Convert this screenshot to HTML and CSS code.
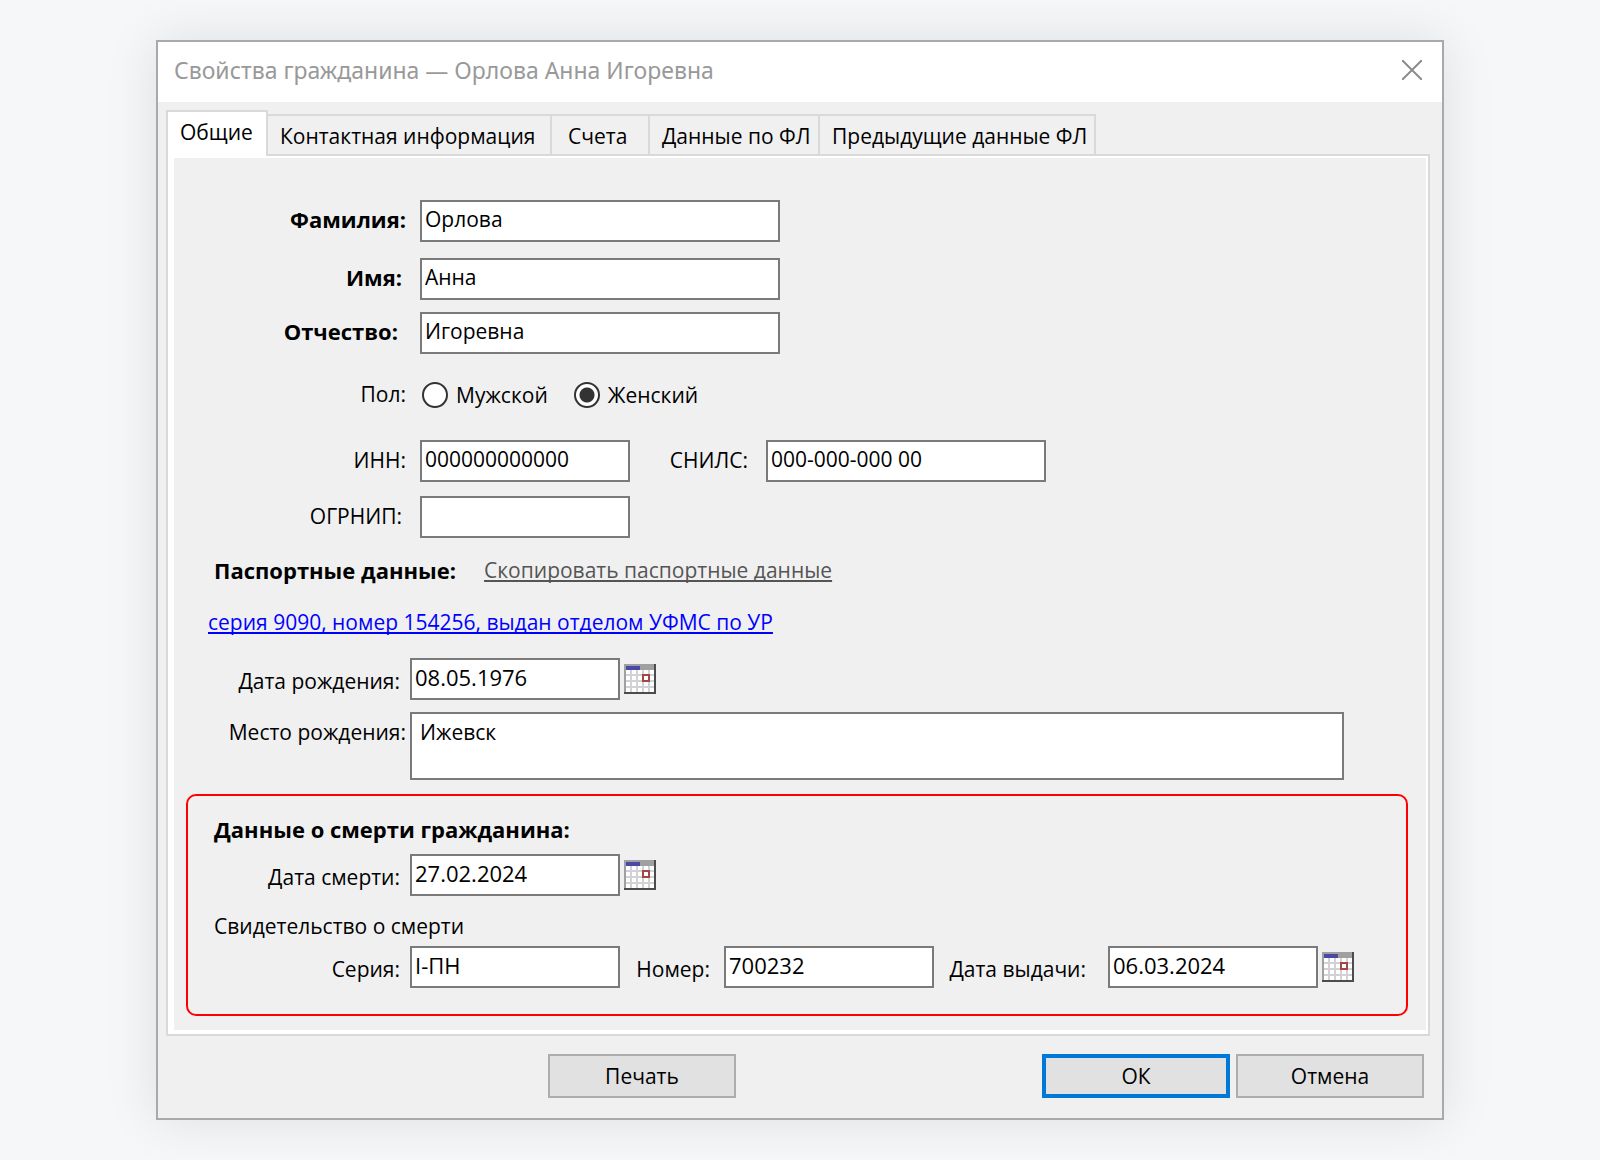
FILE: index.html
```html
<!DOCTYPE html>
<html lang="ru">
<head>
  <meta charset="utf-8">
  <meta name="viewport" content="width=device-width, initial-scale=1">
  <title>Свойства гражданина — Орлова Анна Игоревна</title>
  <link rel="stylesheet" href="styles.css">
</head>
<body>
  <svg class="sprite" aria-hidden="true">
    <symbol id="calendar" viewBox="0 0 16 15">
      <path fill="#ffffff" d="M0 0h16v15H0z"/>
      <path fill="#d2d2d6" d="M3 3h1v11H3zM6 3h1v11H6zM9 3h1v11H9zM12 3h1v11h-1zM1 5h14v1H1zM1 8h14v1H1zM1 11h14v1H1z"/>
      <path fill="#a0a0a0" d="M0 0h15v3H1v11H0z"/>
      <path fill="#484aa6" d="M1 1h7v2H1z"/>
      <path fill="#ffffff" d="M10 6h2v2h-2z"/>
      <path fill="#a04846" fill-rule="evenodd" d="M9 5h4v4H9zM10 6v2h2V6z"/>
      <path fill="#4c4c4c" d="M15 0h1v15H0v-1h15z"/>
    </symbol>
  </svg>

  <main class="dialog" role="dialog" aria-labelledby="dialog-title">
    <header class="titlebar">
      <h1 class="titlebar__text" id="dialog-title">Свойства гражданина — Орлова Анна Игоревна</h1>
      <button class="titlebar__close" type="button" aria-label="Закрыть">
        <svg viewBox="0 0 20 20" width="20" height="20"><path d="M0 0l20 20M20 0L0 20" fill="none" stroke="#8c8c8c" stroke-width="2"/></svg>
      </button>
    </header>

    <form class="content">
      <div class="tabs" role="tablist">
        <button class="tab tab--active" type="button" role="tab" aria-selected="true">Общие</button>
        <button class="tab tab--contacts" type="button" role="tab">Контактная информация</button>
        <button class="tab tab--accounts" type="button" role="tab">Счета</button>
        <button class="tab tab--person" type="button" role="tab">Данные по ФЛ</button>
        <button class="tab tab--history" type="button" role="tab">Предыдущие данные ФЛ</button>
      </div>

      <section class="panel" role="tabpanel">
        <div class="sheet">
          <div class="group group--names">
            <div class="row">
              <label class="label label--main label--bold" for="surname">Фамилия:</label>
              <input class="field field--wide" id="surname" type="text" value="Орлова">
            </div>
            <div class="row row--spaced">
              <label class="label label--main label--bold label--inset" for="name">Имя:</label>
              <input class="field field--wide" id="name" type="text" value="Анна">
            </div>
            <div class="row">
              <label class="label label--main label--bold label--inset-more" for="patronymic">Отчество:</label>
              <input class="field field--wide" id="patronymic" type="text" value="Игоревна">
            </div>
          </div>

          <div class="row row--sex" role="radiogroup" aria-labelledby="sex-label">
            <span class="label label--main" id="sex-label">Пол:</span>
            <label class="choice"><input class="radio" type="radio" name="sex">Мужской</label>
            <label class="choice"><input class="radio" type="radio" name="sex" checked>Женский</label>
          </div>

          <div class="group group--codes">
            <div class="row">
              <label class="label label--main" for="inn">ИНН:</label>
              <input class="field" id="inn" type="text" value="000000000000">
              <label class="label label--snils label--inset" for="snils">СНИЛС:</label>
              <input class="field field--snils" id="snils" type="text" value="000-000-000 00">
            </div>
            <div class="row">
              <label class="label label--main label--inset" for="ogrnip">ОГРНИП:</label>
              <input class="field" id="ogrnip" type="text">
            </div>
          </div>

          <div class="passport">
            <h2 class="heading">Паспортные данные:</h2>
            <a class="link link--muted" href="#copy">Скопировать паспортные данные</a>
          </div>
          <div class="document">
            <a class="link" href="#passport">серия 9090, номер 154256, выдан отделом УФМС по УР</a>
          </div>

          <div class="group group--birth">
            <div class="row">
              <label class="label label--birth label--date" for="birth-date">Дата рождения:</label>
              <input class="field field--dated" id="birth-date" type="text" value="08.05.1976">
              <button class="calendar" type="button" aria-label="Выбрать дату рождения"><svg width="32" height="30"><use href="#calendar"/></svg></button>
            </div>
            <div class="row row--top">
              <label class="label label--birth label--close" for="birth-place">Место рождения:</label>
              <textarea class="area" id="birth-place" rows="2">Ижевск</textarea>
            </div>
          </div>

          <section class="death">
            <h2 class="heading">Данные о смерти гражданина:</h2>
            <div class="row">
              <label class="label label--death label--date" for="death-date">Дата смерти:</label>
              <input class="field field--dated" id="death-date" type="text" value="27.02.2024">
              <button class="calendar" type="button" aria-label="Выбрать дату смерти"><svg width="32" height="30"><use href="#calendar"/></svg></button>
            </div>
            <h3 class="subheading">Свидетельство о смерти</h3>
            <div class="row">
              <label class="label label--death label--date" for="series">Серия:</label>
              <input class="field field--dated" id="series" type="text" value="I-ПН">
              <label class="label label--number label--date" for="number">Номер:</label>
              <input class="field field--dated" id="number" type="text" value="700232">
              <label class="label label--issued label--date" for="issued">Дата выдачи:</label>
              <input class="field field--dated" id="issued" type="text" value="06.03.2024">
              <button class="calendar" type="button" aria-label="Выбрать дату выдачи"><svg width="32" height="30"><use href="#calendar"/></svg></button>
            </div>
          </section>
        </div>
      </section>

      <footer class="actions">
        <button class="button button--print" type="button">Печать</button>
        <button class="button button--default" type="submit">ОК</button>
        <button class="button" type="button">Отмена</button>
      </footer>
    </form>
  </main>
</body>
</html>
```
FILE: styles.css
```css
* {
  box-sizing: border-box;
}

body {
  margin: 0;
  padding: 40px 24px;
  background: #f5f7f9;
  color: #000;
  font: 21px/28px "Open Sans", "Noto Sans", sans-serif;
}

button,
input,
textarea {
  margin: 0;
  border-radius: 0;
  color: inherit;
  font: inherit;
}

h1,
h2,
h3 {
  margin: 0;
}

.sprite {
  display: none;
}

/* Window frame */

.dialog {
  max-width: 1288px;
  margin: 0 auto;
  border: 2px solid #a9a9a9;
  background: #f0f0f0;
  box-shadow: 0 0 50px rgba(0, 0, 0, 0.1);
}

.titlebar {
  display: flex;
  align-items: center;
  justify-content: space-between;
  height: 60px;
  padding: 0 20px 4px 16px;
  background: #fff;
}

.titlebar__text {
  color: #999;
  font: 400 23px/32px "Noto Sans", sans-serif;
}

.titlebar__close {
  display: flex;
  padding: 0;
  border: 0;
  background: none;
}

.content {
  padding: 8px 12px 20px 8px;
}

/* Tabs */

.tabs {
  display: flex;
  align-items: flex-end;
  margin-bottom: -2px;
}

.tab {
  height: 42px;
  padding: 1px 0 0 12px;
  border: 2px solid #d9d9d9;
  border-left: 0;
  background: #f0f0f0;
  text-align: left;
  white-space: nowrap;
}

.tab--active {
  position: relative;
  width: 102px;
  height: 46px;
  padding: 0 0 4px 12px;
  border-bottom: 0;
  border-left: 2px solid #d9d9d9;
  background: #fff;
}

.tab--contacts {
  width: 284px;
}

.tab--accounts {
  width: 98px;
  padding-left: 16px;
}

.tab--person {
  width: 170px;
}

.tab--history {
  width: 276px;
}

.panel {
  padding: 2px 2px 4px 6px;
  border: 2px solid #d9d9d9;
  background: #fff;
}

.sheet {
  padding: 42px 18px 14px 12px;
  background: #f0f0f0;
}

/* Form rows */

.group {
  display: flex;
  flex-direction: column;
  gap: 12px;
}

.group--codes {
  gap: 14px;
}

.row {
  display: flex;
  align-items: center;
}

.row--spaced {
  margin-top: 4px;
}

.row--top {
  align-items: flex-start;
}

.row--sex {
  height: 30px;
  margin: 26px 0 30px;
}

.label {
  flex: none;
  padding: 0 14px 2px 0;
  text-align: right;
  white-space: nowrap;
}

.label--main {
  width: 234px;
}

.label--birth {
  width: 224px;
}

.label--death {
  width: 222px;
}

.label--snils {
  width: 136px;
}

.label--bold {
  padding-bottom: 4px;
  font-size: 22px;
  font-weight: 700;
}

.label--inset {
  padding-right: 18px;
}

.label--inset-more {
  padding-right: 22px;
}

.label--date {
  padding: 3px 10px 0 0;
}

.label--close {
  padding: 6px 4px 0 0;
}

.label--number {
  width: 104px;
  padding-right: 14px;
}

.label--issued {
  width: 174px;
  padding-right: 22px;
}

.field {
  width: 210px;
  height: 42px;
  padding: 0 3px 4px;
  border: 2px solid #7a7a7a;
  background: #fff;
}

.field--dated {
  font-size: 22px;
}

.field--wide {
  width: 360px;
}

.field--snils {
  width: 280px;
}

.area {
  display: block;
  flex: 0 1 934px;
  height: 68px;
  padding: 4px 8px;
  border: 2px solid #7a7a7a;
  background: #fff;
  resize: none;
}

.choice {
  display: flex;
  align-items: center;
  gap: 8px;
  margin: 0 26px 0 2px;
}

.choice + .choice {
  margin: 0;
}

.radio {
  width: 26px;
  height: 26px;
  border: 2px solid #333;
  border-radius: 50%;
  background: #fff;
  appearance: none;
}

.radio:checked {
  background: radial-gradient(circle, #333 7px, #fff 8px);
}

.calendar {
  display: flex;
  margin-left: 4px;
  padding: 0;
  border: 0;
  background: none;
}

/* Documents */

.heading {
  font-size: 22px;
  font-weight: 700;
  line-height: 32px;
}

.passport {
  display: flex;
  align-items: center;
  gap: 28px;
  margin-top: 16px;
  padding-left: 28px;
}

.document {
  margin: 20px 0;
  padding-left: 22px;
  line-height: 32px;
}

.link {
  color: #00f;
  text-decoration-thickness: 2px;
  text-underline-offset: 2px;
  text-decoration-skip-ink: none;
}

.link--muted {
  color: #555;
}

.death {
  margin-top: 14px;
  padding: 17px 0 26px;
  border: 2px solid #f00;
  border-radius: 10px;
}

.death .heading {
  margin-bottom: 9px;
  padding-left: 26px;
}

.subheading {
  margin: 14px 0 4px;
  padding-left: 26px;
  font-size: 21px;
  font-weight: 400;
  line-height: 32px;
}

/* Bottom buttons */

.actions {
  display: flex;
  gap: 6px;
  margin-top: 18px;
  padding: 0 6px 0 382px;
}

.button {
  width: 188px;
  height: 44px;
  padding: 0;
  border: 2px solid #adadad;
  background: #e1e1e1;
}

.button--print {
  margin-right: auto;
}

.button--default {
  border: 4px solid #0078d7;
}
```
